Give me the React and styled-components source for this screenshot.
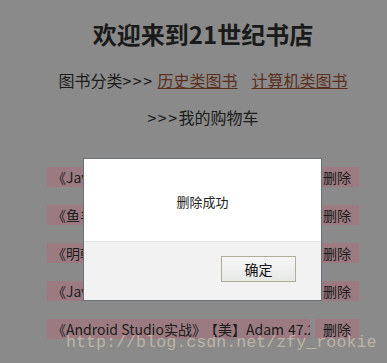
import React from "react";
import styled, { createGlobalStyle } from "styled-components";

const GlobalStyle = createGlobalStyle`
  html, body {
    margin: 0;
    padding: 0;
    background: #8a8a8a;
    overflow: hidden;
  }
  body {
    font-family: "Noto Sans CJK SC", "Noto Sans", sans-serif;
    color: #1c1c1c;
  }
`;

const Page = styled.div`
  position: relative;
  display: flow-root;
  width: 406px;
  height: 363px;
  text-align: center;
`;

const Title = styled.h1`
  margin: 18px 0 0;
  font-size: 24px;
  line-height: 32px;
  font-weight: bold;
  color: #1a1a1a;
`;

const Nav = styled.div`
  margin-top: 18px;
  font-size: 16px;
  line-height: 24px;
`;

const Arrows = styled.span`
  letter-spacing: 1.5px;
  margin-right: ${({ $space }) => ($space ? 4 : 0)}px;
`;

const NavLink = styled.a`
  color: #5a2e1c;
  text-decoration: underline;
  margin-left: ${({ $gap }) => $gap || 0}px;
`;

const CartLine = styled.div`
  margin-top: 13px;
  font-size: 16px;
  line-height: 24px;
`;

const Rows = styled.div`
  margin: 38px auto 0;
  width: 312px;
  display: flex;
  flex-direction: column;
  gap: 18px;
`;

const Row = styled.div`
  display: flex;
  height: 20px;
  font-size: 14px;
  line-height: 20px;
`;

const Info = styled.div`
  width: 263px;
  flex: none;
  display: grid;
  grid-template-columns: 152px 84px 60px;
  background: #9b7b81;
  padding-left: 5px;
  box-sizing: border-box;
  overflow: hidden;
  white-space: nowrap;
  text-align: left;
`;

const Cell = styled.span`
  overflow: hidden;
`;

const DeleteButton = styled.span`
  margin-left: 5px;
  width: 44px;
  flex: none;
  background: #9b7b81;
  text-align: center;
`;

const Modal = styled.div`
  position: absolute;
  left: 83px;
  top: 158px;
  width: 239px;
  height: 143px;
  box-sizing: border-box;
  border: 1px solid #687079;
  background: #f2f2f2;
  display: flex;
  flex-direction: column;
`;

const ModalBody = styled.div`
  height: 83px;
  background: #ffffff;
  border-bottom: 1px solid #e2e2e2;
  display: flex;
  align-items: center;
  justify-content: center;
  font-size: 13px;
  color: #222;
  padding-top: 2px;
  box-sizing: border-box;
`;

const ModalFooter = styled.div`
  display: flex;
  justify-content: flex-end;
  padding: 14px 25px 0 0;
`;

const OkButton = styled.button`
  width: 75px;
  height: 26px;
  border: 1px solid #b3ab9c;
  background: linear-gradient(#f6f6f6, #e6e8e6);
  font-family: "Noto Sans CJK SC", sans-serif;
  font-size: 14px;
  color: #111;
  padding: 0;
`;

const Watermark = styled.div`
  position: absolute;
  left: 66px;
  top: 333px;
  font-family: "Liberation Mono", monospace;
  font-size: 16.7px;
  line-height: 20px;
  color: rgba(205, 195, 175, 0.75);
  white-space: nowrap;
`;

const books = [
  { title: "《Java核心技术》", author: "【美】Horstmann", price: "89.00" },
  { title: "《鱼羊野史》", author: "高晓松", price: "38.00" },
  { title: "《明朝那些事儿》", author: "当年明月", price: "29.80" },
  { title: "《Java编程思想》", author: "【美】Eckel", price: "86.00" },
  { title: "《Android Studio实战》", author: "【美】Adam", price: "47.20" },
];

export default function App() {
  return (
    <Page>
      <GlobalStyle />
      <Title>欢迎来到21世纪书店</Title>
      <Nav>
        图书分类<Arrows $space>&gt;&gt;&gt;</Arrows>
        <NavLink href="#">历史类图书</NavLink>
        <NavLink href="#" $gap={14}>计算机类图书</NavLink>
      </Nav>
      <CartLine>
        <Arrows>&gt;&gt;&gt;</Arrows>我的购物车
      </CartLine>
      <Rows>
        {books.map((b, i) => (
          <Row key={i}>
            <Info>
              <Cell>{b.title}</Cell>
              <Cell>{b.author}</Cell>
              <Cell>{b.price}</Cell>
            </Info>
            <DeleteButton>删除</DeleteButton>
          </Row>
        ))}
      </Rows>
      <Modal>
        <ModalBody>删除成功</ModalBody>
        <ModalFooter>
          <OkButton>确定</OkButton>
        </ModalFooter>
      </Modal>
      <Watermark>http://blog.csdn.net/zfy_rookie</Watermark>
    </Page>
  );
}
